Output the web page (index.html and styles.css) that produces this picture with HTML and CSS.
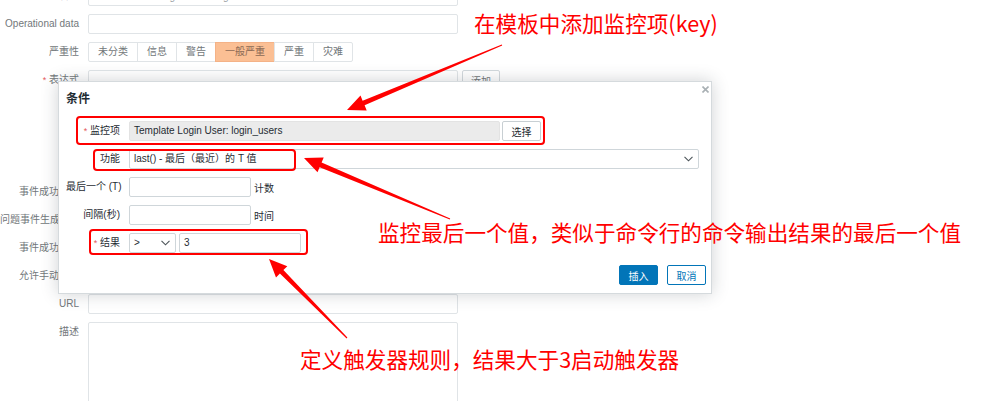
FILE: index.html
```html
<!DOCTYPE html>
<html lang="zh-CN">
<head>
  <meta charset="UTF-8">
  <title>触发器 - 条件</title>
  <link rel="stylesheet" href="styles.css">
</head>
<body>
  <form class="trigger-form">
    <div class="form-row">
      <label class="form-label">名称</label>
      <input class="text-box text-box--muted" type="text" value="The number of login users is greater than 3">
    </div>
    <div class="form-row">
      <label class="form-label">Operational data</label>
      <input class="text-box" type="text">
    </div>
    <div class="form-row">
      <label class="form-label">严重性</label>
      <div class="severity">
        <span class="severity-item">未分类</span>
        <span class="severity-item">信息</span>
        <span class="severity-item">警告</span>
        <span class="severity-item severity-item--on">一般严重</span>
        <span class="severity-item">严重</span>
        <span class="severity-item">灾难</span>
      </div>
    </div>
    <div class="form-row">
      <label class="form-label"><span class="req">*</span> 表达式</label>
      <textarea class="text-box text-box--expr"></textarea>
      <button type="button" class="btn-alt">添加</button>
    </div>
    <div class="form-row">
      <label class="form-label"></label>
      <span class="link">表达式构造器</span>
    </div>
    <div class="form-row">
      <label class="form-label">事件成功迭代</label>
      <span class="plain">表达式</span>
    </div>
    <div class="form-row">
      <label class="form-label">问题事件生成模式</label>
      <span class="plain">单个</span>
    </div>
    <div class="form-row">
      <label class="form-label">事件成功关闭</label>
      <span class="plain">所有问题</span>
    </div>
    <div class="form-row">
      <label class="form-label">允许手动关闭</label>
      <span class="plain"></span>
    </div>
    <div class="form-row">
      <label class="form-label">URL</label>
      <input class="text-box" type="text">
    </div>
    <div class="form-row">
      <label class="form-label">描述</label>
      <textarea class="text-box text-box--desc"></textarea>
    </div>
  </form>

  <div class="dialog">
    <span class="dialog-close">
      <svg width="7" height="7" viewBox="0 0 7 7"><path d="M0.5 0.5 L6.5 6.5 M6.5 0.5 L0.5 6.5" stroke="#a9b0b4" stroke-width="1.6"/></svg>
    </span>
    <h2 class="dialog-title">条件</h2>
    <div class="dialog-grid">
      <label class="dlg-label"><span class="req">*</span> 监控项</label>
      <div class="dlg-field">
        <div class="box box--readonly box--item">Template Login User: login_users</div>
        <button type="button" class="btn-alt btn-alt--pick">选择</button>
      </div>

      <label class="dlg-label">功能</label>
      <div class="dlg-field">
        <div class="box box--select box--func">
          <span>last() - 最后（最近）的 T 值</span>
          <svg width="9" height="6" viewBox="0 0 9 6"><path d="M0.5 0.8 L4.5 4.8 L8.5 0.8" fill="none" stroke="#4b5358" stroke-width="1.1"/></svg>
        </div>
      </div>

      <label class="dlg-label">最后一个 (T)</label>
      <div class="dlg-field">
        <div class="box box--short"></div>
        <span class="suffix">计数</span>
      </div>

      <label class="dlg-label">间隔(秒)</label>
      <div class="dlg-field">
        <div class="box box--short"></div>
        <span class="suffix">时间</span>
      </div>

      <label class="dlg-label"><span class="req">*</span> 结果</label>
      <div class="dlg-field">
        <div class="box box--select box--op">
          <span>&gt;</span>
          <svg width="9" height="6" viewBox="0 0 9 6"><path d="M0.5 0.8 L4.5 4.8 L8.5 0.8" fill="none" stroke="#4b5358" stroke-width="1.1"/></svg>
        </div>
        <div class="box box--short box--value">3</div>
      </div>
    </div>
    <div class="dialog-footer">
      <button type="button" class="btn-main">插入</button>
      <button type="button" class="btn-cancel">取消</button>
    </div>
  </div>

  <!-- red markup drawn on top of the screenshot -->
  <div class="mark mark--item"></div>
  <div class="mark mark--func"></div>
  <div class="mark mark--result"></div>

  <svg class="arrows" width="987" height="401" viewBox="0 0 987 401">
    <polygon points="502.2,45.5 364.6,105.3 366.7,110.4 347,110 360.5,95.6 362.6,100.7 501.8,44.5" fill="#ff0000"/>
    <polygon points="449.8,219.5 319.6,167.3 317.5,172.3 304,158 323.7,157.6 321.6,162.6 450.2,218.5" fill="#ff0000"/>
    <polygon points="346.6,338.4 279.9,273.6 276.0,277.4 269,259 287.3,266.2 283.4,270.0 347.4,337.6" fill="#ff0000"/>
  </svg>

  <div class="note note--key">在模板中添加监控项(key)</div>
  <div class="note note--last">监控最后一个值，类似于命令行的命令输出结果的最后一个值</div>
  <div class="note note--rule">定义触发器规则，结果大于3启动触发器</div>
</body>
</html>
```

FILE: styles.css
```css
* {
  box-sizing: border-box;
}

html,
body {
  margin: 0;
}

body {
  position: relative;
  width: 987px;
  height: 401px;
  overflow: hidden;
  background: #fff;
  color: #1f2c33;
  font-family: "Liberation Sans", "Noto Sans CJK SC", sans-serif;
  font-size: 10px;
}

/* background trigger form */
.trigger-form {
  display: flex;
  flex-direction: column;
  gap: 8px;
  margin-top: -14px;
}

.form-row {
  display: flex;
  align-items: flex-start;
  gap: 9px;
}

.form-label {
  flex: none;
  width: 79px;
  line-height: 20px;
  text-align: right;
  white-space: nowrap;
  color: #72777a;
}

.req {
  color: #e45959;
  font-size: 9px;
}

.text-box {
  width: 370px;
  height: 20px;
  padding: 0 5px;
  border: 1px solid #e0e4e7;
  border-radius: 2px;
  background: #fff;
  font: inherit;
  color: #1f2c33;
  resize: none;
}

.text-box--muted {
  color: #9aa0a4;
}

.text-box--expr {
  height: 76px;
}

.text-box--desc {
  height: 90px;
}

.severity {
  display: flex;
  height: 20px;
}

.severity-item {
  padding: 0 9px;
  line-height: 18px;
  border: 1px solid #e0e4e7;
  margin-left: -1px;
  color: #72777a;
  background: #fff;
}

.severity-item:first-child {
  margin-left: 0;
  border-radius: 2px 0 0 2px;
}

.severity-item:last-child {
  border-radius: 0 2px 2px 0;
}

.severity-item--on {
  background: #fbbf94;
  border-color: #f4b287;
  color: #8c6a55;
}

.btn-alt {
  height: 20px;
  width: 38px;
  padding: 0;
  margin-left: -5px;
  border: 1px solid #d3d9dd;
  border-radius: 2px;
  background: #fff;
  font: inherit;
  color: #72777a;
}

.link,
.plain {
  line-height: 20px;
  color: #72777a;
}

/* condition dialog */
.dialog {
  position: absolute;
  left: 58px;
  top: 81px;
  width: 654px;
  padding: 9px 5px 8px 7px;
  background: #fff;
  border: 1px solid #d5dadd;
  box-shadow: 0 0 16px rgba(40, 50, 60, 0.22);
}

.dialog-close {
  position: absolute;
  top: 4px;
  right: 2px;
  line-height: 0;
}

.dialog-title {
  margin: 0 0 14px;
  font-size: 12px;
  line-height: 16px;
  font-weight: bold;
  color: #1f2c33;
}

.dialog-grid {
  display: grid;
  grid-template-columns: 54px 1fr;
  column-gap: 9px;
  row-gap: 8px;
}

.dlg-label {
  line-height: 20px;
  text-align: right;
  white-space: nowrap;
  color: #1f2c33;
}

.dlg-field {
  display: flex;
  align-items: center;
  height: 20px;
}

.box {
  height: 20px;
  padding: 0 4px;
  line-height: 18px;
  border: 1px solid #cfd6da;
  border-radius: 2px;
  background: #fff;
  white-space: nowrap;
}

.box--readonly {
  background: #ebebeb;
  border-color: #e3e3e3;
}

.box--item {
  width: 371px;
}

.btn-alt--pick {
  width: 39px;
  margin-left: 2px;
  border-color: #c8cfd3;
  color: #1f2c33;
}

.box--select {
  display: flex;
  align-items: center;
  justify-content: space-between;
  padding-right: 5px;
}

.box--func {
  width: 570px;
}

.box--op {
  width: 47px;
}

.box--short {
  width: 122px;
}

.box--value {
  margin-left: 3px;
}

.suffix {
  margin-left: 3px;
  color: #1f2c33;
}

.dialog-footer {
  display: flex;
  justify-content: flex-end;
  gap: 9px;
  margin-top: 12px;
}

.btn-main,
.btn-cancel {
  width: 39px;
  height: 20px;
  padding: 0;
  border: 1px solid #0275b8;
  border-radius: 2px;
  font: inherit;
}

.btn-main {
  background: #0275b8;
  color: #fff;
}

.btn-cancel {
  background: #fff;
  color: #0275b8;
}

/* annotations */
.mark {
  position: absolute;
  border: 2.5px solid #ff0000;
  border-radius: 4px;
}

.mark--item {
  left: 76px;
  top: 116px;
  width: 469px;
  height: 29px;
}

.mark--func {
  left: 93px;
  top: 149px;
  width: 203px;
  height: 22px;
}

.mark--result {
  left: 89px;
  top: 229px;
  width: 219px;
  height: 26px;
}

.arrows {
  position: absolute;
  left: 0;
  top: 0;
  pointer-events: none;
}

.note {
  position: absolute;
  font-family: "Noto Sans CJK SC", sans-serif;
  line-height: 1;
  color: #ff0000;
  white-space: nowrap;
}

.note--key {
  left: 474px;
  top: 12px;
  font-size: 21.6px;
}

.note--last {
  left: 378px;
  top: 221px;
  font-size: 21.6px;
}

.note--rule {
  left: 300px;
  top: 348px;
  font-size: 21.6px;
}
```
